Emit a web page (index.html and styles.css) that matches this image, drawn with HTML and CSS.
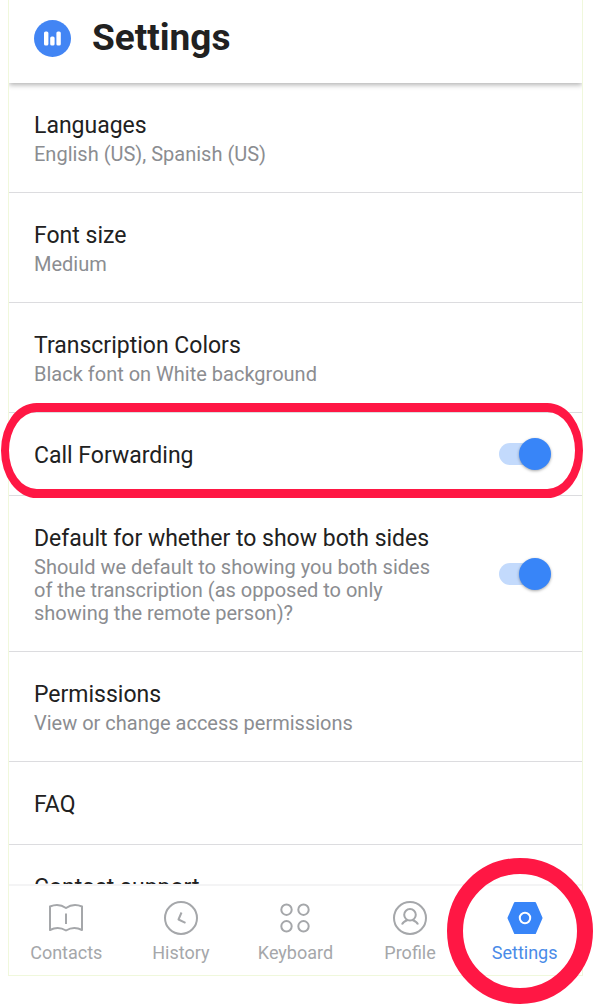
FILE: index.html
```html
<!DOCTYPE html>
<html lang="en">
<head>
    <meta charset="UTF-8">
    <meta name="viewport" content="width=device-width, initial-scale=1.0">
    <title>Settings</title>
    <link rel="stylesheet" href="styles.css">
</head>
<body>
    <div class="phone">
        <header class="app-header">
            <svg class="logo" viewBox="0 0 37 37" aria-hidden="true">
                <circle cx="18.5" cy="18.5" r="18.5" fill="#4285f4"/>
                <rect x="10" y="11.5" width="4.4" height="14" rx="1.6" fill="#fff"/>
                <rect x="16.2" y="16.5" width="4.4" height="9" rx="1.6" fill="#fff"/>
                <rect x="22.4" y="11.5" width="4.4" height="14" rx="1.6" fill="#fff"/>
            </svg>
            <h1>Settings</h1>
        </header>

        <main class="settings-list">
            <a class="row" href="#languages">
                <span class="row-text">
                    <span class="row-title">Languages</span>
                    <span class="row-sub">English (US), Spanish (US)</span>
                </span>
            </a>
            <a class="row" href="#font-size">
                <span class="row-text">
                    <span class="row-title">Font size</span>
                    <span class="row-sub">Medium</span>
                </span>
            </a>
            <a class="row" href="#colors">
                <span class="row-text">
                    <span class="row-title">Transcription Colors</span>
                    <span class="row-sub">Black font on White background</span>
                </span>
            </a>
            <label class="row marked" for="forwarding">
                <span class="row-text">
                    <span class="row-title">Call Forwarding</span>
                </span>
                <input class="switch" type="checkbox" id="forwarding" checked>
            </label>
            <label class="row" for="bothSides">
                <span class="row-text">
                    <span class="row-title">Default for whether to show both sides</span>
                    <span class="row-sub">Should we default to showing you both sides of the transcription (as opposed to only showing the remote person)?</span>
                </span>
                <input class="switch" type="checkbox" id="bothSides" checked>
            </label>
            <a class="row" href="#permissions">
                <span class="row-text">
                    <span class="row-title">Permissions</span>
                    <span class="row-sub">View or change access permissions</span>
                </span>
            </a>
            <a class="row" href="#faq">
                <span class="row-text">
                    <span class="row-title">FAQ</span>
                </span>
            </a>
            <a class="row" href="#support">
                <span class="row-text">
                    <span class="row-title">Contact support</span>
                </span>
            </a>
        </main>

        <nav class="tab-bar">
            <a class="tab" href="#contacts">
                <svg viewBox="0 0 36 36" aria-hidden="true">
                    <path d="M2 6.5C7 4.5 13 4.5 18 8C23 4.5 29 4.5 34 6.5V30C29 27.5 23 27.5 18 30.5C13 27.5 7 27.5 2 30Z"/>
                    <path d="M18 13.5V24"/>
                </svg>
                <span>Contacts</span>
            </a>
            <a class="tab" href="#history">
                <svg viewBox="0 0 36 36" aria-hidden="true">
                    <circle cx="18" cy="18" r="16"/>
                    <path d="M18.5 12.5L15.5 19.5L22.5 22.8"/>
                </svg>
                <span>History</span>
            </a>
            <a class="tab" href="#keyboard">
                <svg viewBox="0 0 36 36" aria-hidden="true">
                    <circle cx="9.5" cy="9.7" r="5.2"/>
                    <circle cx="26.5" cy="9.7" r="5.2"/>
                    <circle cx="9.5" cy="26.3" r="5.2"/>
                    <circle cx="26.5" cy="26.3" r="5.2"/>
                </svg>
                <span>Keyboard</span>
            </a>
            <a class="tab" href="#profile">
                <svg viewBox="0 0 36 36" aria-hidden="true">
                    <circle cx="18" cy="18" r="16"/>
                    <circle cx="18" cy="14.8" r="5.8"/>
                    <path d="M10 24.5C11 22 13 21 15.5 20M26 24.5C25 22 23 21 20.500 20"/>
                </svg>
                <span>Profile</span>
            </a>
            <a class="tab active" href="#settings">
                <svg viewBox="0 0 36 36" aria-hidden="true">
                    <path class="hex" d="M8 3H28L34.5 18L28 33H8L1.5 18Z"/>
                    <circle class="hub" cx="18" cy="18" r="5.2"/>
                </svg>
                <span>Settings</span>
            </a>
        </nav>
    </div>
</body>
</html>
```
FILE: styles.css
```css
:root {
    --text: #212121;
    --muted: #8b8d91;
    --tab: #a5a7aa;
    --line: #dcdcdf;
    --blue: #3885f8;
    --mark: #ff1744;
    --frame: #f0f8dc;
}

*,
*::before,
*::after {
    margin: 0;
    padding: 0;
    box-sizing: border-box;
}

body {
    height: 100vh;
    padding: 0 11px 28px 8px;
    background: #fff;
    color: var(--text);
    font-family: Roboto, sans-serif;
    overflow: hidden;
}

a {
    color: inherit;
    text-decoration: none;
}

.phone {
    display: flex;
    flex-direction: column;
    height: 100%;
    border: 1px solid var(--frame);
    border-top: none;
}

.app-header {
    position: relative;
    display: flex;
    align-items: center;
    gap: 21px;
    padding: 14px 25px 21px;
    background: #fff;
    box-shadow: 0 2px 5px rgba(0, 0, 0, 0.3);
    clip-path: inset(0 0 -10px 0);
}

.logo {
    width: 37px;
    height: 37px;
}

.app-header h1 {
    font-size: 37px;
    line-height: 48px;
    font-weight: 700;
}

.settings-list {
    flex: 1;
    min-height: 0;
    overflow-x: visible;
    overflow-y: clip;
}

.row {
    position: relative;
    display: flex;
    align-items: center;
    justify-content: space-between;
    gap: 55px;
    padding: 29px 31px 26px 25px;
    border-bottom: 1px solid var(--line);
}

.row-title,
.row-sub {
    display: block;
}

.row-title {
    font-size: 23px;
    line-height: 27px;
}

.row-sub {
    margin-top: 4px;
    color: var(--muted);
    font-size: 20px;
    line-height: 23px;
}

/* red outline around the highlighted row */
.marked::after {
    content: "";
    position: absolute;
    inset: -10px -1px -3px -8px;
    border: 9px solid var(--mark);
    border-width: 9px 8px;
    border-radius: 36px / 48px;
    pointer-events: none;
}

.switch {
    appearance: none;
    display: grid;
    align-items: center;
    flex: none;
    width: 52px;
    height: 32px;
    margin: -6px 0 -3px;
    cursor: pointer;
}

.switch::before,
.switch::after {
    content: "";
    grid-area: 1 / 1;
}

.switch::before {
    width: 44px;
    height: 22px;
    border-radius: 11px;
    background: #c3dafc;
}

.switch::after {
    justify-self: start;
    width: 32px;
    height: 32px;
    border-radius: 50%;
    background: #fff;
    box-shadow: 0 1px 3px rgba(0, 0, 0, 0.35);
}

.switch:checked::after {
    justify-self: end;
    background: var(--blue);
}

.tab-bar {
    display: flex;
    border-top: 2px solid #f4f4f5;
    background: #fff;
}

.tab {
    position: relative;
    display: flex;
    flex: 1 1 0;
    flex-direction: column;
    align-items: center;
    gap: 7px;
    padding: 14px 0 12px;
    color: var(--tab);
    font-size: 18px;
    line-height: 20px;
}

.tab svg {
    width: 36px;
    height: 36px;
    fill: none;
    stroke: currentColor;
    stroke-width: 2;
    stroke-linejoin: round;
}

.tab.active {
    color: #4a8be8;
}

.tab .hex {
    fill: var(--blue);
    stroke: var(--blue);
}

.tab .hub {
    stroke: #fff;
}

/* red ring around the current tab */
.tab.active::after {
    content: "";
    position: absolute;
    top: -28px;
    right: -11px;
    width: 146px;
    height: 146px;
    border: 16px solid var(--mark);
    border-radius: 50%;
    pointer-events: none;
}
```
